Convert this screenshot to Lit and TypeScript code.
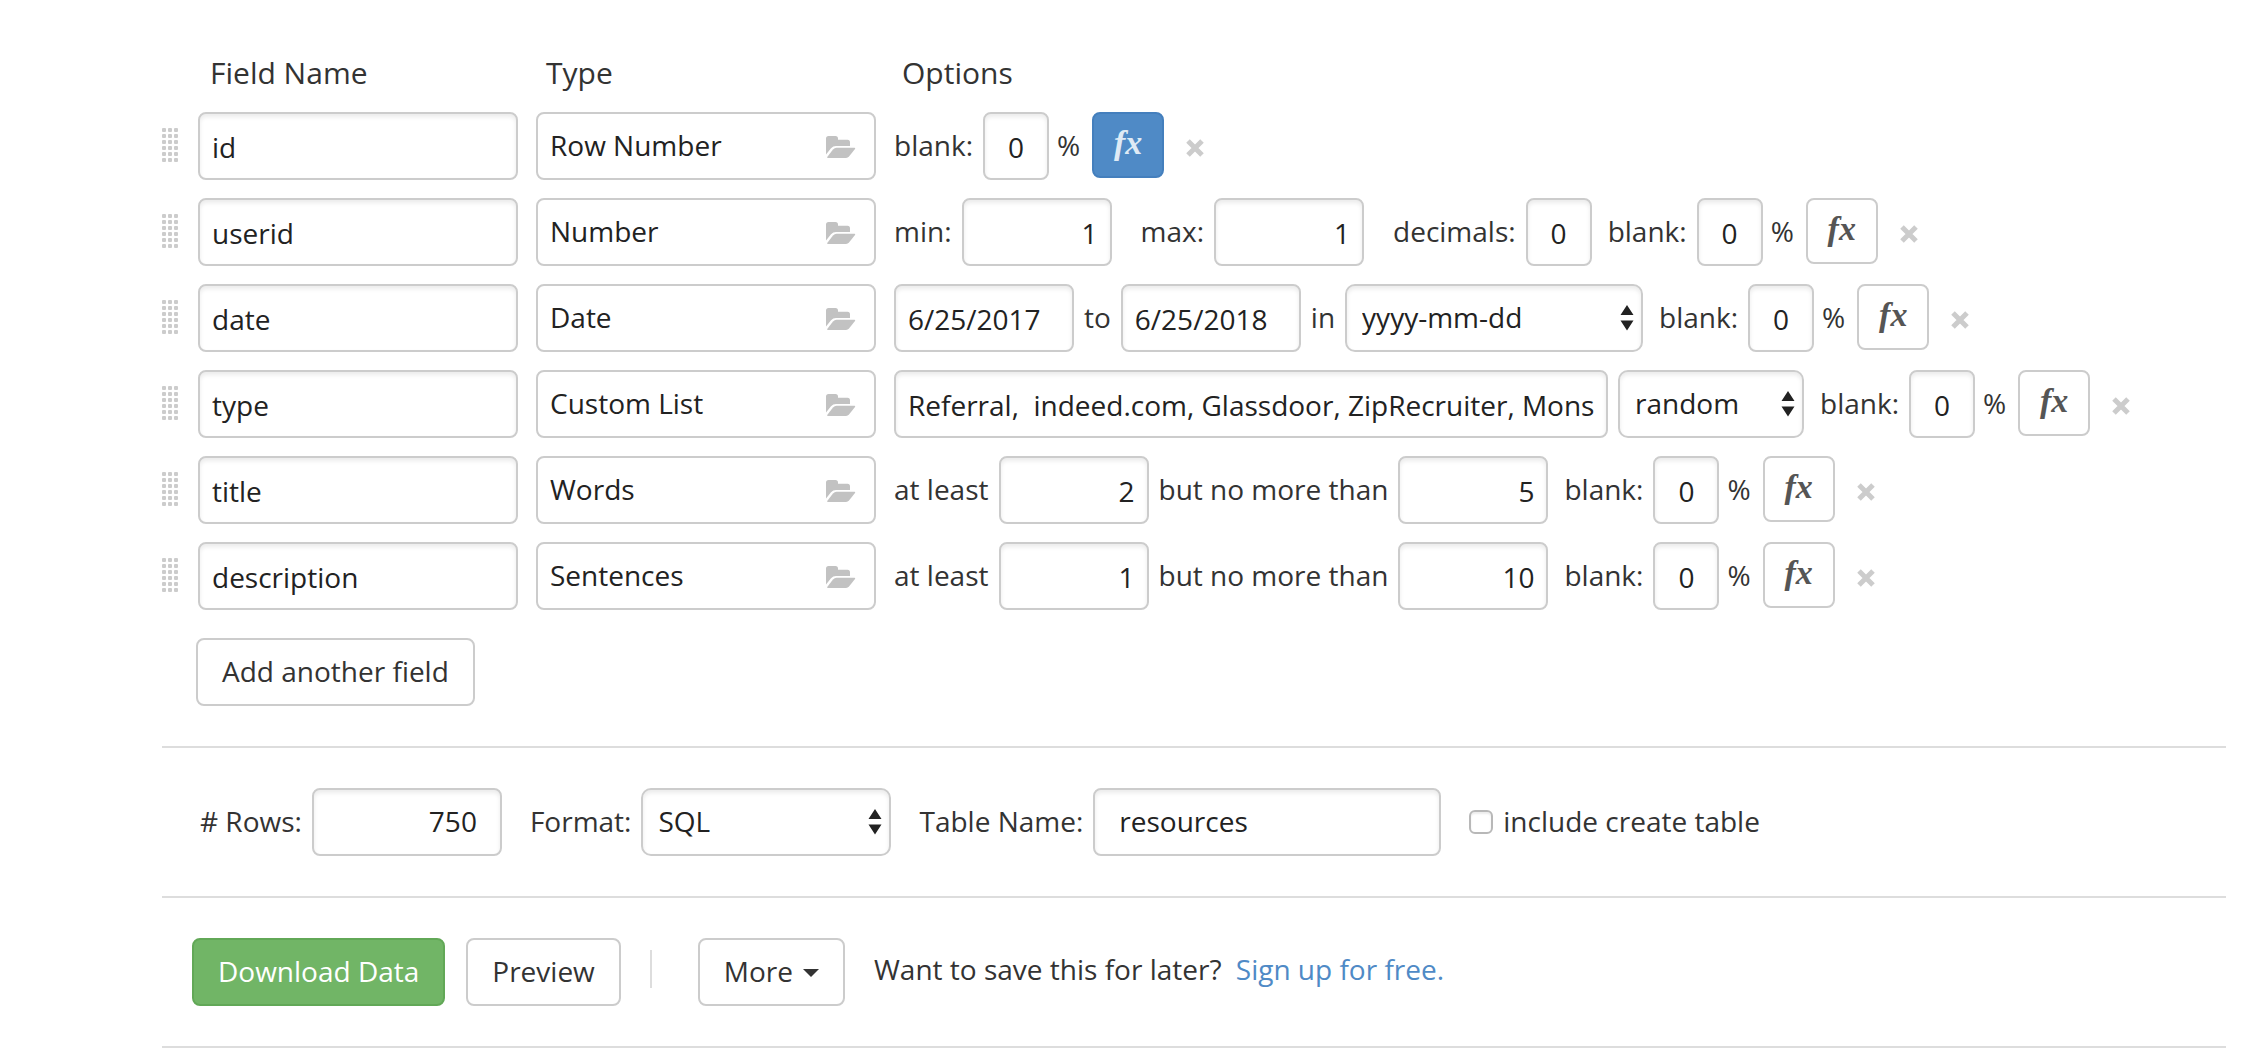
import { LitElement, html, css, svg, nothing, TemplateResult } from "lit";
import { customElement, state } from "lit/decorators.js";

type Option =
  | { kind: "number"; label: string; value: string; wide?: boolean }
  | { kind: "small"; label: string; value: string; wide?: boolean }
  | { kind: "date"; label: string; value: string }
  | { kind: "list"; label: string; value: string }
  | { kind: "select"; label: string; value: string; name: string; size: string };

interface Field {
  name: string;
  type: string;
  formula: boolean;
  options: Option[];
}

const FIELDS: Field[] = [
  { name: "id", type: "Row Number", formula: true, options: [] },
  {
    name: "userid",
    type: "Number",
    formula: false,
    options: [
      { kind: "number", label: "min:", value: "1" },
      { kind: "number", label: "max:", value: "1", wide: true },
      { kind: "small", label: "decimals:", value: "0", wide: true },
    ],
  },
  {
    name: "date",
    type: "Date",
    formula: false,
    options: [
      { kind: "date", label: "", value: "6/25/2017" },
      { kind: "date", label: "to", value: "6/25/2018" },
      { kind: "select", label: "in", value: "yyyy-mm-dd", name: "Date format", size: "large" },
    ],
  },
  {
    name: "type",
    type: "Custom List",
    formula: false,
    options: [
      { kind: "list", label: "", value: "Referral,  indeed.com, Glassdoor, ZipRecruiter, Mons" },
      { kind: "select", label: "", value: "random", name: "List order", size: "short" },
    ],
  },
  {
    name: "title",
    type: "Words",
    formula: false,
    options: [
      { kind: "number", label: "at least", value: "2" },
      { kind: "number", label: "but no more than", value: "5" },
    ],
  },
  {
    name: "description",
    type: "Sentences",
    formula: false,
    options: [
      { kind: "number", label: "at least", value: "1" },
      { kind: "number", label: "but no more than", value: "10" },
    ],
  },
];

const gripIcon = html`<svg width="16" height="34" viewBox="0 0 16 34" fill="#ccc" aria-hidden="true">
  ${[0, 6, 12, 18, 24, 30].map((y) =>
    [0, 6, 12].map((x) => svg`<rect x=${x} y=${y} width="4" height="4" rx="1" />`)
  )}
</svg>`;

const folderIcon = html`<svg width="30" height="22" viewBox="0 0 30 22" fill="#c2c2c2" aria-hidden="true">
  <path d="M0 2.5Q0 0 2.5 0H9.500Q12 0 12 2.500V3.700H21.500Q24 3.700 24 6.200V10H10Q7 10 5 12.300L0 18.500Z" />
  <path d="M10.500 11.700H28.300Q29.800 11.800 29 13L23.200 20.300Q21.800 22 20 22H2Q.6 22 1.400 20.700L7 13.600Q8.600 11.700 10.500 11.700Z" />
</svg>`;

const crossIcon = html`<svg width="18" height="18" viewBox="0 0 18 18" stroke="#ccc" stroke-width="5" aria-hidden="true">
  <path d="M2 2L16 16M16 2L2 16" fill="none" />
</svg>`;

const sortIcon = html`<svg class="sort" width="14" height="26" viewBox="0 0 14 26" fill="#222" aria-hidden="true">
  <path d="M7 0L13.500 10H.5ZM7 25.500L13.500 15.500H.5Z" />
</svg>`;

const caretIcon = html`<svg width="16" height="8" viewBox="0 0 16 8" fill="#333" aria-hidden="true">
  <path d="M0 0H16L8 8Z" />
</svg>`;

@customElement("app-root")
export class AppRoot extends LitElement {
  static styles = css`
    :host {
      display: block;
      background: #fff;
      color: #333;
      font: 28px/40px "Open Sans", sans-serif;
    }
    .page {
      padding: 53px 22px 0 162px;
    }
    .section {
      border-bottom: 2px solid #ddd;
    }
    .section.bar {
      display: flex;
      flex-wrap: wrap;
      align-items: center;
      gap: 28px;
      padding: 40px 0;
    }
    .section.settings {
      padding-left: 38px;
    }
    .section.actions {
      padding-left: 30px;
      gap: 21px;
    }
    .grid-row {
      display: grid;
      grid-template-columns: 18px 320px 340px minmax(0, 1fr);
      column-gap: 18px;
    }
    .grid-row.head {
      grid-template-columns: 18px 318px 338px minmax(0, 1fr);
      padding-left: 2px;
      margin-bottom: 19px;
      font-size: 30px;
    }
    .head .title {
      padding-left: 10px;
    }
    .rows {
      display: flex;
      flex-direction: column;
      gap: 18px;
    }
    input,
    select,
    button {
      box-sizing: border-box;
      height: 68px;
      margin: 0;
      border: 2px solid #ccc;
      border-radius: 8px;
      background: #fff;
      color: #222;
      font: inherit;
    }
    input,
    select {
      box-shadow: inset 0 3px 4px rgba(0, 0, 0, 0.08);
      outline: none;
    }
    input {
      padding: 2px 12px 0;
    }
    .name {
      width: 100%;
    }
    .number {
      width: 150px;
      text-align: right;
    }
    .small {
      width: 66px;
      padding: 2px 0 0;
      text-align: center;
    }
    .date {
      width: 180px;
    }
    .list {
      width: 714px;
    }
    .rowcount {
      width: 190px;
      padding: 0 23px 2px;
      text-align: right;
    }
    .tablename {
      width: 348px;
      padding: 0 24px 2px;
    }
    button {
      display: flex;
      align-items: center;
      padding: 0 24px 2px;
      color: #333;
      cursor: pointer;
    }
    .type {
      justify-content: space-between;
      padding: 0 18px 2px 12px;
      color: #222;
    }
    .type svg {
      padding-top: 4px;
    }
    .grip,
    .remove {
      justify-content: center;
      padding: 0;
      border: 0;
      background: none;
    }
    .grip {
      justify-content: flex-start;
      padding-bottom: 2px;
    }
    .remove {
      padding-top: 4px;
      margin-left: 22px;
    }
    .formula {
      align-self: flex-start;
      justify-content: center;
      width: 72px;
      height: 66px;
      margin-left: 12px;
      padding: 0 0 4px;
      color: #555;
      font: italic bold 34px/40px "Liberation Serif", serif;
    }
    .formula.active {
      border-color: #447fbd;
      background: #4f8ac6;
      color: #dfeaf5;
    }
    .options,
    .field,
    .blank {
      display: flex;
      align-items: center;
    }
    .options {
      flex-wrap: wrap;
      gap: 10px;
    }
    .field {
      gap: 10px;
    }
    .field.wide {
      margin-left: 19px;
    }
    .blank {
      margin-left: 6px;
    }
    .blank:first-child {
      margin-left: 0;
    }
    .text {
      padding-bottom: 2px;
      white-space: nowrap;
    }
    .percent {
      padding: 0 0 2px 8px;
    }
    .picker {
      display: flex;
      position: relative;
    }
    select {
      appearance: none;
      width: 100%;
      padding: 0 40px 2px 15px;
      border-radius: 10px;
    }
    .picker.large {
      width: 298px;
    }
    .picker.short {
      width: 186px;
    }
    .picker.medium {
      width: 250px;
    }
    .sort {
      position: absolute;
      right: 9px;
      top: 21px;
      pointer-events: none;
    }
    .add {
      margin: 28px 0 40px 34px;
    }
    .check {
      appearance: none;
      width: 24px;
      height: 24px;
      padding: 0;
      border: 2px solid #b8b8b8;
      border-radius: 6px;
      box-shadow: inset 0 2px 2px rgba(0, 0, 0, 0.08);
    }
    .check:checked {
      background: #4f8ac6;
    }
    .download {
      border-color: #62a857;
      background: #71b566;
      color: #fff;
    }
    .divider {
      width: 2px;
      height: 38px;
      margin: 0 25px 6px 8px;
      background: #ddd;
    }
    .more {
      gap: 10px;
    }
    .more svg {
      padding-top: 4px;
    }
    .signup {
      margin: 0 0 6px 8px;
    }
    a {
      margin-left: 7px;
      color: #4f8ac6;
      text-decoration: none;
    }
  `;

  @state() private fields: Field[] = FIELDS;

  private remove(index: number) {
    this.fields = this.fields.filter((_, i) => i !== index);
  }

  private add() {
    this.fields = [...this.fields, { name: "", type: "Row Number", formula: false, options: [] }];
  }

  private toggle(index: number) {
    this.fields = this.fields.map((f, i) => (i === index ? { ...f, formula: !f.formula } : f));
  }

  private picker(value: string, name: string, size: string) {
    return html`<span class="picker ${size}">
      <select aria-label=${name}>
        <option selected>${value}</option>
      </select>
      ${sortIcon}
    </span>`;
  }

  private option(o: Option): TemplateResult {
    const wide = "wide" in o && o.wide ? "wide" : "";
    return html`<label class="field ${wide}">
      ${o.label ? html`<span class="text">${o.label}</span>` : nothing}
      ${o.kind === "select"
        ? this.picker(o.value, o.name, o.size)
        : html`<input class=${o.kind} type="text" aria-label=${o.label || o.kind} .value=${o.value} />`}
    </label>`;
  }

  private row(f: Field, index: number) {
    return html`<div class="grid-row">
      <button class="grip" aria-label="Reorder ${f.name}">${gripIcon}</button>
      <input class="name" type="text" aria-label="Field name" .value=${f.name} />
      <button class="type"><span>${f.type}</span>${folderIcon}</button>
      <div class="options">
        ${f.options.map((o) => this.option(o))}
        <div class="blank">
          <label class="field">
            <span class="text">blank:</span>
            <input class="small" type="text" .value=${"0"} />
          </label>
          <span class="percent">%</span>
          <button
            class="formula ${f.formula ? "active" : ""}"
            aria-pressed=${f.formula ? "true" : "false"}
            @click=${() => this.toggle(index)}
          >fx</button>
          <button class="remove" aria-label="Remove ${f.name}" @click=${() => this.remove(index)}>
            ${crossIcon}
          </button>
        </div>
      </div>
    </div>`;
  }

  render() {
    return html`<main class="page">
      <section class="section">
        <div class="grid-row head">
          <span></span>
          <span class="title">Field Name</span>
          <span class="title">Type</span>
          <span class="title">Options</span>
        </div>
        <div class="rows">${this.fields.map((f, i) => this.row(f, i))}</div>
        <button class="add" @click=${this.add}>Add another field</button>
      </section>

      <section class="section bar settings">
        <label class="field">
          <span class="text"># Rows:</span>
          <input class="rowcount" type="text" .value=${"750"} />
        </label>
        <label class="field">
          <span class="text">Format:</span>
          ${this.picker("SQL", "Format", "medium")}
        </label>
        <label class="field">
          <span class="text">Table Name:</span>
          <input class="tablename" type="text" .value=${"resources"} />
        </label>
        <label class="field">
          <input class="check" type="checkbox" />
          <span class="text">include create table</span>
        </label>
      </section>

      <section class="section bar actions">
        <button class="download">Download Data</button>
        <button>Preview</button>
        <span class="divider"></span>
        <button class="more">More ${caretIcon}</button>
        <span class="signup">Want to save this for later? <a href="#signup">Sign up for free.</a></span>
      </section>
    </main>`;
  }
}
